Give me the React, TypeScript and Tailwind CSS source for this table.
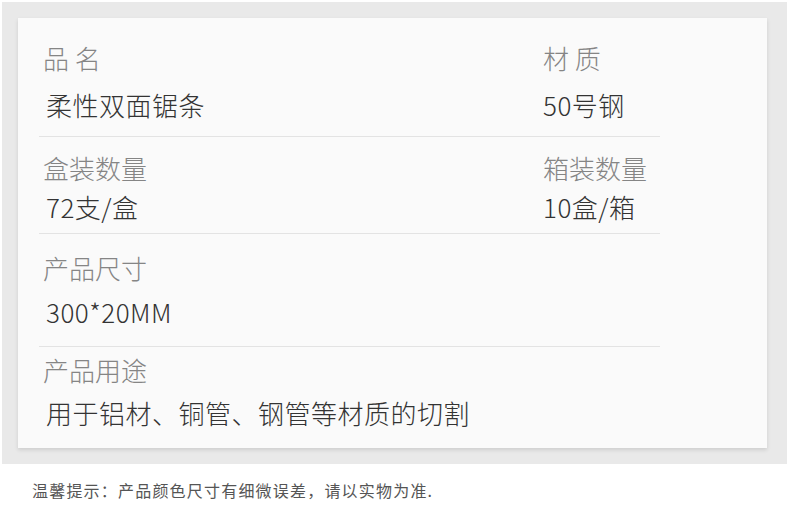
import React from 'react';

type Row = {
  label: string;
  value: string;
  label2?: string;
  value2?: string;
  pt: string;
  gap: string;
  pb: string;
};

const rows: Row[] = [
  { label: '品 名', value: '柔性双面锯条', label2: '材 质', value2: '50号钢', pt: 'pt-[22px]', gap: 'mt-[11px]', pb: 'pb-[13px]' },
  { label: '盒装数量', value: '72支/盒', label2: '箱装数量', value2: '10盒/箱', pt: 'pt-[13px]', gap: 'mt-[3px]', pb: 'pb-[8px]' },
  { label: '产品尺寸', value: '300*20MM', pt: 'pt-[16px]', gap: 'mt-[8px]', pb: 'pb-[16px]' },
  { label: '产品用途', value: '用于铝材、铜管、钢管等材质的切割', pt: 'pt-[5px]', gap: 'mt-[7px]', pb: 'pb-[17px]' },
];

export default function App() {
  return (
    <div className="w-[790px] h-[507px] bg-white font-['Noto_Sans_CJK_SC','Noto_Sans',sans-serif] font-light">
      <div className="ml-[2px] pt-[2px]">
        <div className="w-[785px] h-[462px] bg-[#e9e9e9] pt-[16px] pl-[16px]">
          <div className="w-[749px] h-[430px] bg-[#fafafa] pl-[21px] shadow-[0_2px_4px_rgba(0,0,0,0.12)]">
            {rows.map((r, i) => (
              <div
                key={i}
                className={`w-[621px] pl-[4px] ${r.pt} ${r.pb} ${i < rows.length - 1 ? 'border-b border-[#e3e3e3]' : ''}`}
              >
                <div className="flex">
                  <div className="w-[500px] text-[26px] leading-[36px] text-[#858585]">{r.label}</div>
                  {r.label2 && <div className="text-[26px] leading-[36px] text-[#858585]">{r.label2}</div>}
                </div>
                <div className={`flex ${r.gap}`}>
                  <div className="w-[500px] pl-[3px] whitespace-nowrap text-[26px] leading-[36px] tracking-[0.5px] text-[#333333]">{r.value}</div>
                  {r.value2 && <div className="text-[26px] leading-[36px] tracking-[0.5px] text-[#333333]">{r.value2}</div>}
                </div>
              </div>
            ))}
          </div>
        </div>
      </div>
      <div className="pl-[32px] pt-[15px] text-[16px] leading-[22px] tracking-[1.2px] font-normal text-[#555555]">
        温馨提示：产品颜色尺寸有细微误差，请以实物为准.
      </div>
    </div>
  );
}
